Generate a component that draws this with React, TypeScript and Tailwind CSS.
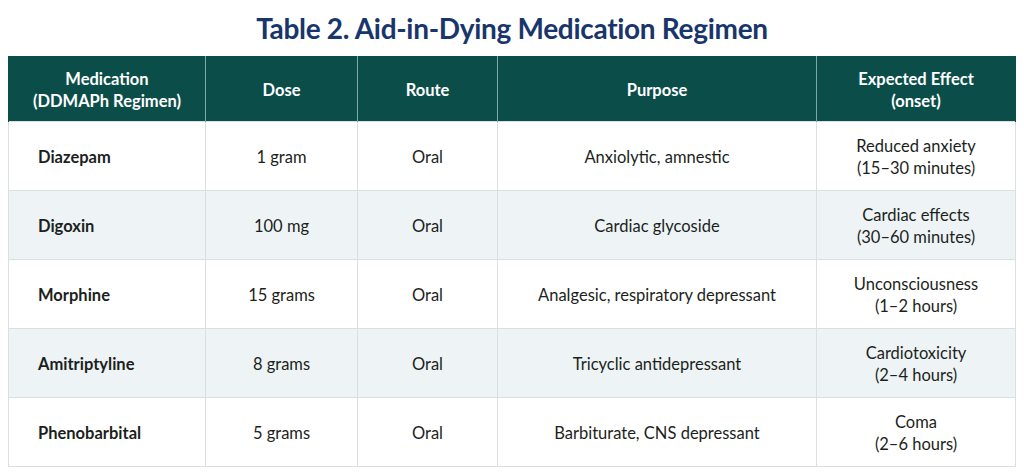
const columns = [
  { label: ["Medication", "(DDMAPh Regimen)"], width: "w-[197px]" },
  { label: ["Dose"], width: "w-[152px]" },
  { label: ["Route"], width: "w-[140px]" },
  { label: ["Purpose"], width: "w-[319px]" },
  { label: ["Expected Effect", "(onset)"], width: "w-[199px]" },
];

const rows = [
  ["Diazepam", "1 gram", "Oral", "Anxiolytic, amnestic", "Reduced anxiety", "(15–30 minutes)"],
  ["Digoxin", "100 mg", "Oral", "Cardiac glycoside", "Cardiac effects", "(30–60 minutes)"],
  ["Morphine", "15 grams", "Oral", "Analgesic, respiratory depressant", "Unconsciousness", "(1–2 hours)"],
  ["Amitriptyline", "8 grams", "Oral", "Tricyclic antidepressant", "Cardiotoxicity", "(2–4 hours)"],
  ["Phenobarbital", "5 grams", "Oral", "Barbiturate, CNS depressant", "Coma", "(2–6 hours)"],
];

export default function App() {
  return (
    <div className="h-[476px] w-[1024px] bg-white font-['Lato','Liberation_Sans',sans-serif]">
      <h1 className="pt-[10px] pb-[10px] text-center text-[28px] font-bold leading-[36px] tracking-[-0.3px] text-[#18366b]">
        Table 2. Aid-in-Dying Medication Regimen
      </h1>
      <table className="ml-2 w-[1007px] table-fixed border-collapse text-[16.5px] text-[#1c1f21]">
        <thead>
          <tr className="h-[65px] bg-[#0b4e49] text-white">
            {columns.map((c, i) => (
              <th
                key={i}
                className={`${c.width} border-x border-[#7fa8a5] px-2 pt-[3px] text-center text-[16.5px] font-bold leading-[22px] first:border-l-[#0b4e49] last:border-r-[#0b4e49]`}
              >
                {c.label.map((l) => (
                  <div key={l}>{l}</div>
                ))}
              </th>
            ))}
          </tr>
        </thead>
        <tbody>
          {rows.map((r, i) => (
            <tr
              key={r[0]}
              className={`h-[69px] ${i % 2 === 1 ? "bg-[#eef4f5]" : "bg-white"}`}
            >
              <td className="border border-[#d9e0e2] pt-[3px] pl-[29px] font-bold">{r[0]}</td>
              <td className="border border-[#d9e0e2] pt-[3px] text-center">{r[1]}</td>
              <td className="border border-[#d9e0e2] pt-[3px] text-center">{r[2]}</td>
              <td className="border border-[#d9e0e2] pt-[3px] text-center">{r[3]}</td>
              <td className="border border-[#d9e0e2] pt-[3px] text-center leading-[22px]">
                <div>{r[4]}</div>
                <div>{r[5]}</div>
              </td>
            </tr>
          ))}
        </tbody>
      </table>
    </div>
  );
}
